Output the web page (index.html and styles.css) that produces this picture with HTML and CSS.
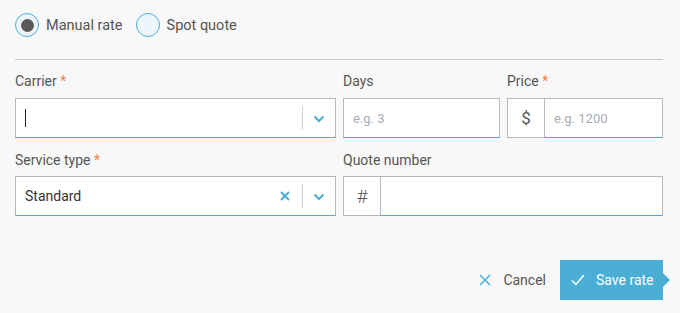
FILE: index.html
```html
<!DOCTYPE html>
<html>
<head>
<meta charset="utf-8">
<link rel="stylesheet" href="styles.css">
</head>
<body>
<div class="page">
  <div class="radios">
    <label class="radio"><span class="circle checked"><span class="dot"></span></span><span class="rlabel">Manual rate</span></label>
    <label class="radio"><span class="circle"></span><span class="rlabel">Spot quote</span></label>
  </div>
  <div class="divider"></div>
  <div class="grid">
    <div class="field">
      <div class="flabel">Carrier <span class="req">*</span></div>
      <div class="box select invalid">
        <span class="value"><span class="caret"></span></span>
        <span class="sep"></span>
        <span class="chev"><svg width="12" height="8" viewBox="0 0 12 8"><path d="M1.5 1.5 L6 6 L10.5 1.5" fill="none" stroke="#4aaed5" stroke-width="2"/></svg></span>
      </div>
    </div>
    <div class="field">
      <div class="flabel">Days</div>
      <div class="box input valid"><span class="ph">e.g. 3</span></div>
    </div>
    <div class="field">
      <div class="flabel">Price <span class="req">*</span></div>
      <div class="group">
        <span class="addon">$</span>
        <div class="box input valid grow"><span class="ph">e.g. 1200</span></div>
      </div>
    </div>
    <div class="field row2">
      <div class="flabel">Service type <span class="req">*</span></div>
      <div class="box select valid">
        <span class="value text">Standard</span>
        <span class="clear"><svg width="10" height="10" viewBox="0 0 10 10"><path d="M1 1 L9 9 M9 1 L1 9" fill="none" stroke="#4aaed5" stroke-width="2"/></svg></span>
        <span class="sep"></span>
        <span class="chev"><svg width="12" height="8" viewBox="0 0 12 8"><path d="M1.5 1.5 L6 6 L10.5 1.5" fill="none" stroke="#4aaed5" stroke-width="2"/></svg></span>
      </div>
    </div>
    <div class="field row2 span2">
      <div class="flabel">Quote number</div>
      <div class="group">
        <span class="addon hash">#</span>
        <div class="box input valid grow"></div>
      </div>
    </div>
  </div>
  <div class="actions">
    <button class="cancel"><svg width="12" height="12" viewBox="0 0 12 12"><path d="M1 1 L11 11 M11 1 L1 11" fill="none" stroke="#4aaed5" stroke-width="1.5"/></svg><span>Cancel</span></button>
    <button class="save"><svg width="14" height="12" viewBox="0 0 14 12"><path d="M1 6.5 L5 10.5 L13 1" fill="none" stroke="#ffffff" stroke-width="1.5"/></svg><span>Save rate</span></button>
  </div>
</div>
</body>
</html>
```
FILE: styles.css
```css
* { box-sizing: border-box; }
html, body { margin: 0; padding: 0; }
body {
  background: #f8f8f8;
  font-family: Roboto, "Liberation Sans", sans-serif;
  color: #555;
  width: 680px;
  height: 313px;
  overflow: hidden;
}
.page { padding: 13px 17px 0 15px; }
.radios { display: flex; align-items: center; height: 24px; gap: 13px; }
.radio { display: flex; align-items: center; cursor: pointer; }
.circle {
  width: 24px; height: 24px; border-radius: 50%;
  border: 1px solid #4aaed5; background: #eef6fc;
  display: flex; align-items: center; justify-content: center;
}
.dot { width: 13px; height: 13px; border-radius: 50%; background: #5a5a5a; }
.rlabel { margin-left: 7px; font-size: 14.5px; color: #555; }
.divider { height: 1px; background: #c8c8c8; margin-top: 22px; }
.grid {
  display: grid;
  grid-template-columns: 321px 157px 156px;
  column-gap: 7px;
  row-gap: 12px;
  margin-top: 11px;
}
.span2 { grid-column: span 2; }
.flabel { font-size: 14px; line-height: 20px; color: #555; margin-bottom: 7px; }
.row2 .flabel { margin-bottom: 6px; }
.req { color: #f08040; }
.box {
  height: 40px; background: #fff;
  border: 1px solid #b8b8b8;
  display: flex; align-items: center;
}
.invalid { border-bottom-color: #ee7a40; }
.valid { border-bottom-color: #4aaed5; }
.select .value { flex: 1; padding-left: 9px; display: flex; align-items: center; }
.caret { display: block; width: 1px; height: 18px; background: #222; }
.text { font-size: 14px; color: #333; }
.sep { width: 1px; height: 24px; background: #d0d0d0; }
.chev { width: 32px; display: flex; justify-content: center; padding-top: 2px; }
.clear { width: 22px; display: flex; justify-content: flex-start; }
.input { padding-left: 9px; }
.ph { font-size: 13px; color: #a5acba; }
.group { display: flex; }
.addon {
  width: 37px; height: 40px; background: #fff;
  border: 1px solid #b8b8b8; border-right: none;
  display: flex; align-items: center; justify-content: center;
  font-size: 17px; color: #555;
}
.hash { font-size: 19px; font-weight: 300; }
.grow { flex: 1; }
.actions {
  display: flex; justify-content: flex-end; align-items: center;
  margin-top: 44px; padding-right: 0;
}
button { font-family: inherit; border: none; cursor: pointer; }
.cancel {
  background: none; display: flex; align-items: center;
  font-size: 14px; color: #555; padding: 0; margin-right: 14px;
}
.cancel svg { margin-right: 12px; }
.save {
  position: relative;
  background: #4aaed5; color: #fff; font-size: 14px;
  height: 40px; width: 103px;
  display: flex; align-items: center; padding: 0 0 0 11px;
}
.save svg { margin-right: 11px; }
.save::after {
  content: ""; position: absolute; right: -7px; top: 13px;
  border-left: 7px solid #4aaed5;
  border-top: 7px solid transparent; border-bottom: 7px solid transparent;
}
```
